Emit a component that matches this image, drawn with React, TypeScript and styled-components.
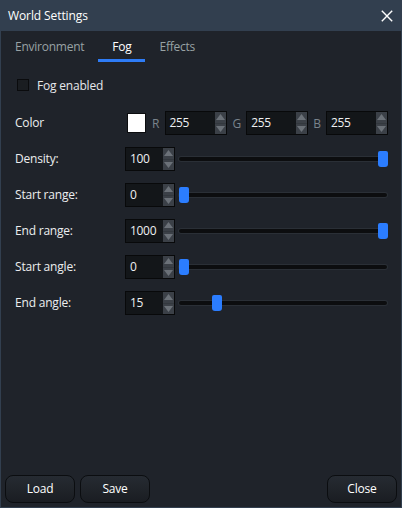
import React, { useState } from "react";
import styled, { createGlobalStyle } from "styled-components";

const GlobalStyle = createGlobalStyle`
  html, body { margin: 0; padding: 0; background: #1f232a; }
  body { font-family: "Open Sans", "Noto Sans", sans-serif; font-size: 12px; color: #e6e8ea; }
  * { box-sizing: border-box; }
`;

const Window = styled.div`
  width: 402px;
  height: 508px;
  display: flex;
  flex-direction: column;
  background: #1f232a;
  border: 1px solid #323f4f;
  border-top: none;
`;

const TitleBar = styled.div`
  height: 31px;
  flex: none;
  display: flex;
  align-items: center;
  justify-content: space-between;
  background: #323f4f;
  padding: 0 9px 0 8px;
  margin: 0 -1px;
`;

const Title = styled.span`
  font-size: 12px;
  color: #ffffff;
  letter-spacing: -0.1px;
`;

const CloseBtn = styled.button`
  border: none;
  background: transparent;
  padding: 0;
  width: 13px;
  height: 13px;
  display: flex;
  align-items: center;
  justify-content: center;
`;

const TabBar = styled.div`
  height: 31px;
  flex: none;
  display: flex;
  align-items: stretch;
`;

const Tab = styled.div<{ $active?: boolean }>`
  padding: 0 14px;
  display: flex;
  align-items: center;
  font-size: 12px;
  letter-spacing: -0.25px;
  color: ${(p) => (p.$active ? "#ffffff" : "#98a2a4")};
  border-bottom: 3px solid ${(p) => (p.$active ? "#2e7cf6" : "transparent")};
  padding-top: 2px;
`;

const Content = styled.div`
  flex: 1;
  display: flex;
  flex-direction: column;
  padding: 11px 13px 0 14px;
`;

const CheckRow = styled.label`
  height: 24px;
  display: flex;
  align-items: center;
  gap: 8px;
  padding-left: 2px;
  margin-bottom: 14px;
  font-size: 12px;
  letter-spacing: -0.2px;
`;

const CheckBox = styled.span`
  width: 12px;
  height: 12px;
  background: #1a1d21;
  border: 1px solid #0a0b0d;
`;

const Row = styled.div`
  height: 24px;
  display: flex;
  align-items: center;
  margin-bottom: 12px;
`;

const Label = styled.span`
  width: 110px;
  flex: none;
  font-size: 12px;
  letter-spacing: -0.2px;
  color: #eceeef;
  margin-top: -2px;
`;

const Swatch = styled.span`
  width: 20px;
  height: 20px;
  margin-left: 2px;
  background: #ffffff;
  border: 1px solid #0c0d0f;
`;

const ChannelLabel = styled.span<{ $gap: number }>`
  margin-left: ${(p) => p.$gap}px;
  margin-right: 5px;
  color: #7a838c;
  font-size: 12px;
`;

const SpinBox = styled.div<{ $w: number }>`
  width: ${(p) => p.$w}px;
  height: 24px;
  flex: none;
  display: flex;
  background: #131619;
  border: 1px solid #08090a;
`;

const SpinText = styled.span`
  flex: 1;
  display: flex;
  align-items: center;
  padding: 0 0 2px 4px;
  font-size: 12px;
  color: #eef0f2;
  letter-spacing: -0.3px;
`;

const SpinArrows = styled.div`
  width: 11px;
  flex: none;
  display: flex;
  flex-direction: column;
  background: #3b4047;
`;

const ArrowHalf = styled.div`
  flex: 1;
  display: flex;
  align-items: center;
  justify-content: center;
  &:first-child { border-bottom: 1px solid #33383e; }
`;

const SliderTrack = styled.div`
  position: relative;
  margin-left: 4px;
  width: 208px;
  height: 4px;
  border-radius: 2px;
  background: #0c0d0f;
  box-shadow: 0 0 0 1px #2a2f36;
`;

const Handle = styled.div`
  position: absolute;
  top: -6px;
  width: 10px;
  height: 16px;
  background: #2b7dff;
  border-radius: 2px 2px 3px 3px;
`;

const Footer = styled.div`
  flex: none;
  display: flex;
  gap: 5px;
  padding: 0 4px 4px 4px;
`;

const Spacer = styled.div`
  flex: 1;
`;

const Button = styled.button`
  width: 70px;
  height: 28px;
  border-radius: 8px;
  border: 1px solid #0b0d10;
  background: linear-gradient(#262b32, #1a1d22);
  color: #ffffff;
  font-family: "Open Sans", "Noto Sans", sans-serif;
  font-size: 12px;
  letter-spacing: -0.2px;
  padding: 0 0 2px 0;
`;

const Arrows = () => (
  <SpinArrows>
    <ArrowHalf>
      <svg width="9" height="6" viewBox="0 0 9 6">
        <polygon points="0,6 4.5,0 9,6" fill="#6b7178" />
      </svg>
    </ArrowHalf>
    <ArrowHalf>
      <svg width="9" height="6" viewBox="0 0 9 6">
        <polygon points="0,0 4.5,6 9,0" fill="#6b7178" />
      </svg>
    </ArrowHalf>
  </SpinArrows>
);

const Spin = ({ value, w }: { value: number; w: number }) => (
  <SpinBox $w={w}>
    <SpinText>{value}</SpinText>
    <Arrows />
  </SpinBox>
);

const sliders = [
  { label: "Density:", value: 100, max: 100 },
  { label: "Start range:", value: 0, max: 1000 },
  { label: "End range:", value: 1000, max: 1000 },
  { label: "Start angle:", value: 0, max: 90 },
  { label: "End angle:", value: 15, max: 90 },
];

export default function App() {
  const [tab] = useState("Fog");
  return (
    <>
      <GlobalStyle />
      <Window>
        <TitleBar>
          <Title>World Settings</Title>
          <CloseBtn aria-label="Close">
            <svg width="12" height="12" viewBox="0 0 12 12">
              <path d="M0.8 0.8 L11.2 11.2 M11.2 0.8 L0.8 11.2" stroke="#ffffff" strokeWidth="1.4" />
            </svg>
          </CloseBtn>
        </TitleBar>
        <TabBar>
          {["Environment", "Fog", "Effects"].map((t) => (
            <Tab key={t} $active={t === tab}>
              {t}
            </Tab>
          ))}
        </TabBar>
        <Content>
          <CheckRow>
            <CheckBox />
            Fog enabled
          </CheckRow>
          <Row>
            <Label>Color</Label>
            <Swatch />
            <ChannelLabel $gap={6}>R</ChannelLabel>
            <Spin value={255} w={62} />
            <ChannelLabel $gap={6}>G</ChannelLabel>
            <Spin value={255} w={62} />
            <ChannelLabel $gap={5}>B</ChannelLabel>
            <Spin value={255} w={62} />
          </Row>
          {sliders.map((s) => (
            <Row key={s.label}>
              <Label>{s.label}</Label>
              <Spin value={s.value} w={50} />
              <SliderTrack>
                <Handle style={{ left: Math.round((s.value / s.max) * 199) }} />
              </SliderTrack>
            </Row>
          ))}
        </Content>
        <Footer>
          <Button>Load</Button>
          <Button>Save</Button>
          <Spacer />
          <Button>Close</Button>
        </Footer>
      </Window>
    </>
  );
}
